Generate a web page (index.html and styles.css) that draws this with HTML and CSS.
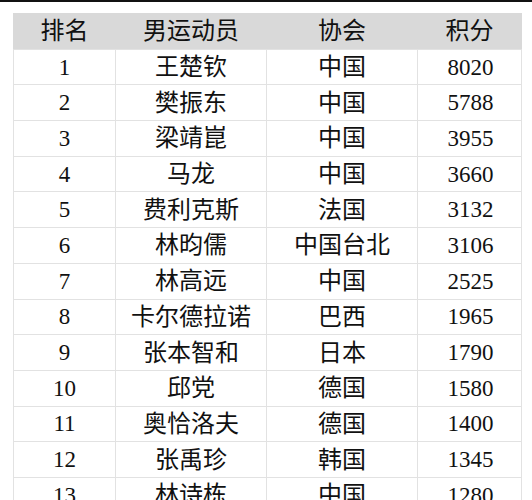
FILE: index.html
```html
<!DOCTYPE html>
<html lang="zh">
<head>
<meta charset="utf-8">
<link rel="stylesheet" href="styles.css">
</head>
<body>
<div class="topbar"></div>
<table class="rank">
<colgroup><col class="c1"><col class="c2"><col class="c3"><col class="c4"></colgroup>
<thead><tr><th>排名</th><th>男运动员</th><th>协会</th><th>积分</th></tr></thead>
<tbody>
<tr><td>1</td><td>王楚钦</td><td>中国</td><td>8020</td></tr>
<tr><td>2</td><td>樊振东</td><td>中国</td><td>5788</td></tr>
<tr><td>3</td><td>梁靖崑</td><td>中国</td><td>3955</td></tr>
<tr><td>4</td><td>马龙</td><td>中国</td><td>3660</td></tr>
<tr><td>5</td><td>费利克斯</td><td>法国</td><td>3132</td></tr>
<tr><td>6</td><td>林昀儒</td><td>中国台北</td><td>3106</td></tr>
<tr><td>7</td><td>林高远</td><td>中国</td><td>2525</td></tr>
<tr><td>8</td><td>卡尔德拉诺</td><td>巴西</td><td>1965</td></tr>
<tr><td>9</td><td>张本智和</td><td>日本</td><td>1790</td></tr>
<tr><td>10</td><td>邱党</td><td>德国</td><td>1580</td></tr>
<tr><td>11</td><td>奥恰洛夫</td><td>德国</td><td>1400</td></tr>
<tr><td>12</td><td>张禹珍</td><td>韩国</td><td>1345</td></tr>
<tr><td>13</td><td>林诗栋</td><td>中国</td><td>1280</td></tr>
</tbody>
</table>
</body>
</html>
```
FILE: styles.css
```css
html, body {
  margin: 0;
  padding: 0;
  background: #ffffff;
  overflow: hidden;
}
body {
  width: 532px;
  height: 500px;
  font-family: "Liberation Serif", "Noto Sans CJK SC", serif;
  color: #111;
}
.topbar {
  height: 2px;
  background: #111;
  margin-bottom: 11px;
}
.rank {
  margin-left: 13px;
  border-collapse: collapse;
  table-layout: fixed;
  width: 508px;
}
.c1 { width: 102px; }
.c2 { width: 151px; }
.c3 { width: 151px; }
.c4 { width: 104px; }
.rank th, .rank td {
  height: 34.7px;
  padding: 0;
  text-align: center;
  font-size: 24px;
  font-weight: normal;
  line-height: 1;
  border: 1px solid #e2e2e2;
}
.rank thead th {
  background: #d9d9d9;
  border-color: #d9d9d9;
  border-bottom-color: #e2e2e2;
}
.rank td:nth-child(1), .rank td:nth-child(4) { font-size: 23px; }
.rank td:nth-child(4) { padding-left: 2px; }
```
